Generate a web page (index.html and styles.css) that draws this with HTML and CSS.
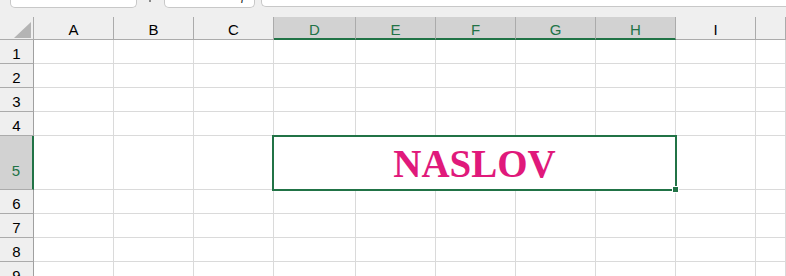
FILE: index.html
```html
<!DOCTYPE html>
<html>
<head>
<meta charset="utf-8">
<link rel="stylesheet" href="styles.css">
</head>
<body>
<div class="top">
  <div class="box namebox"></div>
  <div class="dot"></div>
  <div class="box fxbox"><span class="g">✕</span><span class="g">✓</span><span class="fx">fx</span></div>
  <div class="box formula"></div>
</div>
<div class="sheet">
  <div class="hd corner"><div class="tri"></div></div>
  <div class="hd col">A</div>
  <div class="hd col">B</div>
  <div class="hd col">C</div>
  <div class="hd col sel">D</div>
  <div class="hd col sel">E</div>
  <div class="hd col sel">F</div>
  <div class="hd col sel">G</div>
  <div class="hd col sel">H</div>
  <div class="hd col">I</div>
  <div class="hd col"></div>

  <div class="hd row">1</div>
  <div class="c"></div><div class="c"></div><div class="c"></div><div class="c"></div><div class="c"></div><div class="c"></div><div class="c"></div><div class="c"></div><div class="c"></div><div class="c"></div>

  <div class="hd row">2</div>
  <div class="c"></div><div class="c"></div><div class="c"></div><div class="c"></div><div class="c"></div><div class="c"></div><div class="c"></div><div class="c"></div><div class="c"></div><div class="c"></div>

  <div class="hd row">3</div>
  <div class="c"></div><div class="c"></div><div class="c"></div><div class="c"></div><div class="c"></div><div class="c"></div><div class="c"></div><div class="c"></div><div class="c"></div><div class="c"></div>

  <div class="hd row">4</div>
  <div class="c"></div><div class="c"></div><div class="c"></div><div class="c"></div><div class="c"></div><div class="c"></div><div class="c"></div><div class="c"></div><div class="c"></div><div class="c"></div>

  <div class="hd row tall sel">5</div>
  <div class="c"></div><div class="c"></div><div class="c"></div>
  <div class="c merged">NASLOV</div>
  <div class="c"></div><div class="c"></div>

  <div class="hd row">6</div>
  <div class="c"></div><div class="c"></div><div class="c"></div><div class="c"></div><div class="c"></div><div class="c"></div><div class="c"></div><div class="c"></div><div class="c"></div><div class="c"></div>

  <div class="hd row">7</div>
  <div class="c"></div><div class="c"></div><div class="c"></div><div class="c"></div><div class="c"></div><div class="c"></div><div class="c"></div><div class="c"></div><div class="c"></div><div class="c"></div>

  <div class="hd row">8</div>
  <div class="c"></div><div class="c"></div><div class="c"></div><div class="c"></div><div class="c"></div><div class="c"></div><div class="c"></div><div class="c"></div><div class="c"></div><div class="c"></div>

  <div class="hd row">9</div>
  <div class="c"></div><div class="c"></div><div class="c"></div><div class="c"></div><div class="c"></div><div class="c"></div><div class="c"></div><div class="c"></div><div class="c"></div><div class="c"></div>

  <div class="selection"><div class="handle"></div></div>
</div>
</body>
</html>
```

FILE: styles.css
```css
html, body {
  margin: 0;
  padding: 0;
  background: #ffffff;
  overflow: hidden;
  width: 786px;
  height: 276px;
  font-family: "Liberation Sans", Arial, sans-serif;
}

.top {
  height: 17px;
  background: #efefef;
  display: flex;
  align-items: flex-start;
  overflow: hidden;
}

.box {
  background: #ffffff;
  border: 1px solid #c8c8c8;
  border-top: none;
  border-radius: 0 0 5px 5px;
  box-sizing: border-box;
  height: 8px;
}

.namebox {
  margin-left: 10px;
  width: 127px;
}

.dot {
  width: 2px;
  height: 2px;
  background: #8a8a8a;
  margin-left: 12px;
}

.fxbox {
  margin-left: 13px;
  width: 91px;
  display: flex;
  align-items: flex-end;
  overflow: hidden;
  font-size: 13px;
  line-height: 13px;
  padding-left: 8px;
}

.fxbox .g {
  color: #c4c4c4;
  margin-right: 14px;
  transform: translateY(-5px);
}

.fxbox .fx {
  color: #222;
  font-style: italic;
  font-family: "Liberation Serif", serif;
  margin-left: 18px;
  transform: translateY(-5px);
}

.formula {
  margin-left: 6px;
  flex: 1;
  height: 7px;
  border-radius: 0 0 0 5px;
  border-right: none;
}

.sheet {
  position: relative;
  display: grid;
  grid-template-columns: 34px 80px 80px 80px 82px 80px 80px 80px 80px 80px 1fr;
  grid-template-rows: 23px repeat(4, 24px) 54px repeat(4, 24px);
}

.hd {
  background: #efefef;
  box-sizing: border-box;
  border-right: 1px solid #ababab;
  border-bottom: 1px solid #ababab;
  color: #000;
  font-size: 15px;
  line-height: 17px;
  display: flex;
  justify-content: center;
  align-items: flex-end;
  padding-bottom: 1px;
}

.hd.col.sel {
  background: #d2d2d2;
  color: #217346;
  border-bottom: 2px solid #217346;
  padding-bottom: 0;
}

.corner {
  justify-content: flex-end;
  padding: 0 2px 1px 0;
}

.tri {
  width: 17px;
  height: 16px;
  background: #b4b4b4;
  clip-path: polygon(100% 0, 100% 100%, 0 100%);
}

.row {
  border-right-color: #a0a0a0;
}

.row.tall {
  padding-bottom: 10px;
}

.row.sel {
  background: #d2d2d2;
  color: #217346;
  border-right: 2px solid #217346;
}

.c {
  box-sizing: border-box;
  border-right: 1px solid #dadada;
  border-bottom: 1px solid #dadada;
}

.merged {
  grid-column: span 5;
  display: flex;
  justify-content: center;
  align-items: flex-end;
  padding-bottom: 5px;
  font-family: "Liberation Serif", "Times New Roman", serif;
  font-weight: bold;
  font-size: 39px;
  line-height: 40px;
  color: #e0197b;
}

.selection {
  position: absolute;
  left: 272px;
  top: 118px;
  width: 405px;
  height: 56px;
  box-sizing: border-box;
  border: 2px solid #217346;
  pointer-events: none;
}

.handle {
  position: absolute;
  right: -4px;
  bottom: -4px;
  width: 5px;
  height: 5px;
  background: #217346;
  border: 1px solid #ffffff;
}
```
